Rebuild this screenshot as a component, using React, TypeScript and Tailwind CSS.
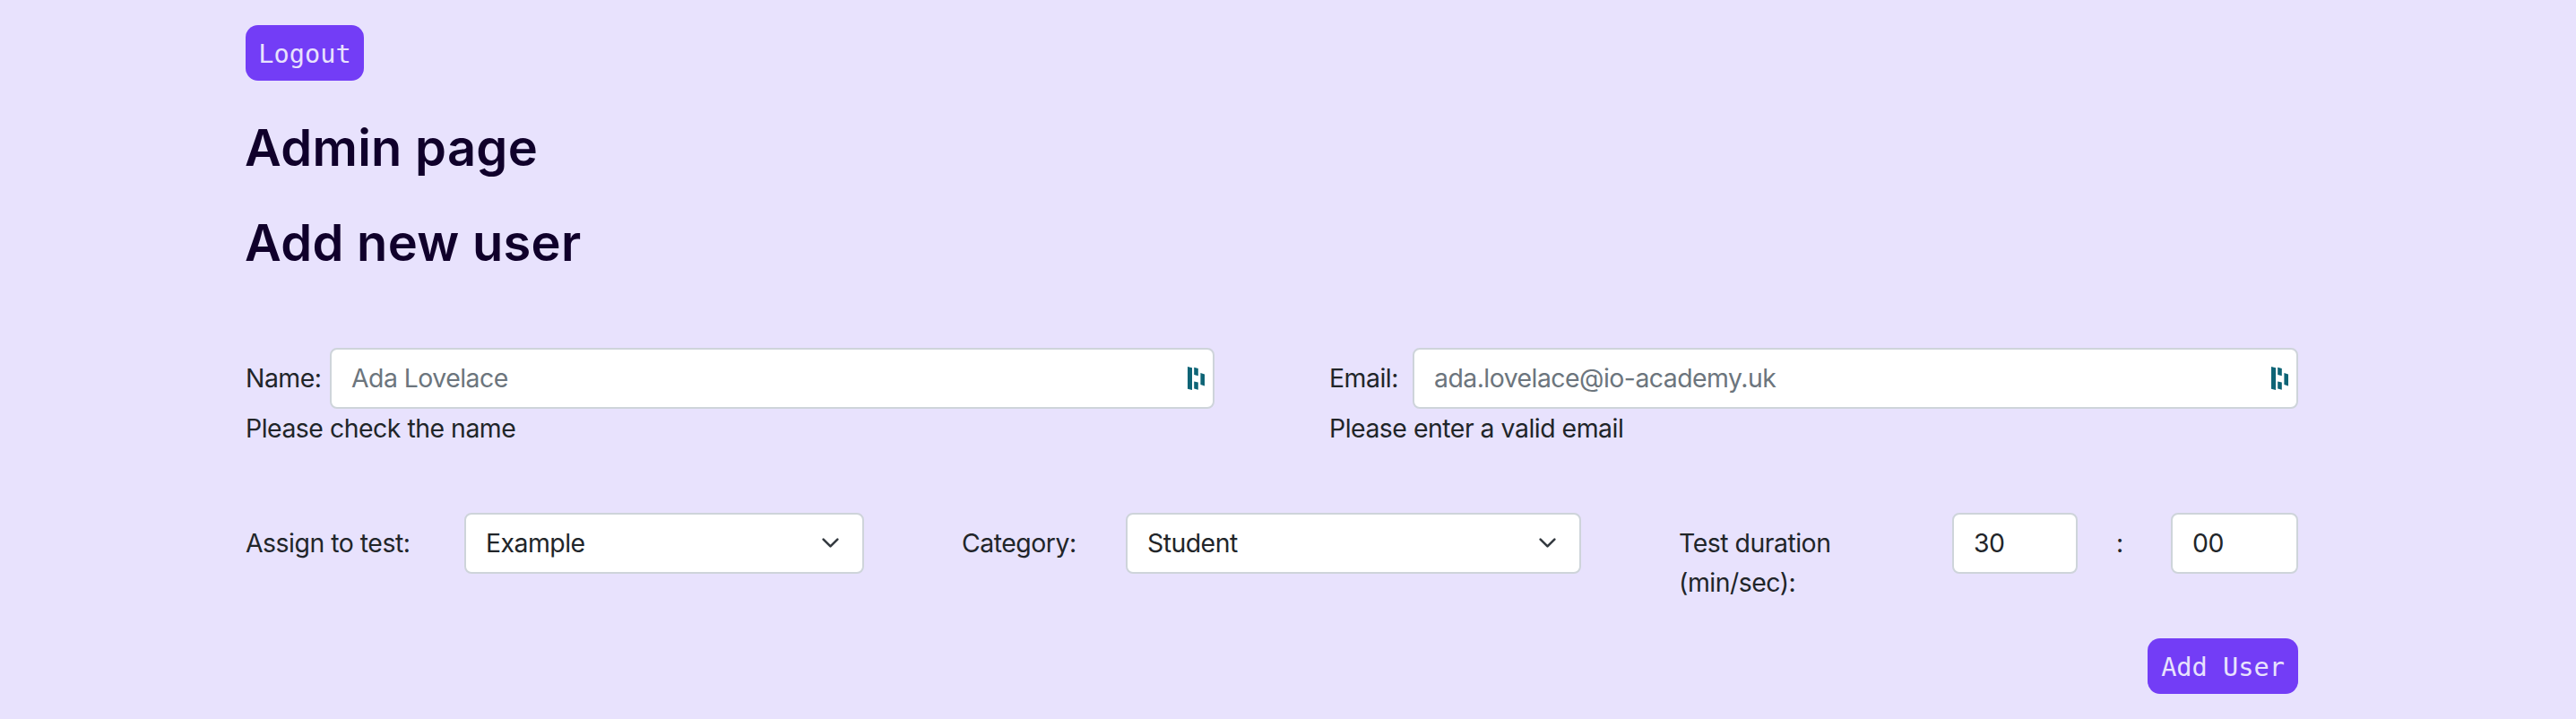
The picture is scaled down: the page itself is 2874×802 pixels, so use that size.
import React from "react";

const labelText = "text-[28.4px] leading-[44px] tracking-[-0.48px]";
const box =
  "flex h-[68px] items-center rounded-[8px] border-2 border-[#ced4da] bg-white text-[28.4px] leading-[44px] tracking-[-0.52px]";

function FieldMark() {
  return (
    <svg width="20" height="26" viewBox="0 0 20 26" fill="#0e6476" aria-hidden="true">
      <path d="M0 0l5 1.2V26l-5-1.2zM7.2.8l4.6 1.2v8.2L7.2 9zM7.2 16.4l4.6 1v8.4l-4.6-1.2zM14.4 7l4.6 1.4v13L14.4 20z" />
    </svg>
  );
}

function Chevron() {
  return (
    <svg width="21" height="21" viewBox="0 0 16 16" fill="none" className="mb-[2px]" aria-hidden="true">
      <path d="m2 5 6 6 6-6" stroke="#343a40" strokeWidth="2" strokeLinecap="round" strokeLinejoin="round" />
    </svg>
  );
}

function Button({ children, className }: { children: React.ReactNode; className: string }) {
  return (
    <button
      type="button"
      className={`flex h-[62px] items-center justify-center rounded-[14px] bg-[#733df6] pt-[2px] font-['DejaVu_Sans_Mono',monospace] text-[28.6px] leading-[44px] text-[#e8e2fd] ${className}`}
    >
      {children}
    </button>
  );
}

function TextField({ label, placeholder, error, className }: { label: string; placeholder: string; error: string; className: string }) {
  return (
    <div className="w-[1081px]">
      <div className="flex items-center">
        <span className={`${labelText} ${className}`}>{label}</span>
        <div className={`${box} flex-1 justify-between pl-[22px] pr-[8px] text-[#6c757d]`}>
          <span>{placeholder}</span>
          <FieldMark />
        </div>
      </div>
      <p className={labelText}>{error}</p>
    </div>
  );
}

export default function App() {
  return (
    <main className="h-[802px] bg-[#e8e2fd] pl-[274px] pr-[310px] pt-[28px] font-[Inter,sans-serif] text-[#212529]">
      <Button className="w-[132px]">Logout</Button>
      <h1 className="-ml-px mt-[40px] text-[56px] font-semibold leading-[70px] tracking-[0.3px] text-[#10002b]">Admin page</h1>
      <h1 className="-ml-px mt-[36px] text-[56px] font-semibold leading-[70px] tracking-[0.3px] text-[#10002b]">Add new user</h1>
      <div className="mt-[82px] flex justify-between">
        <TextField label="Name:" placeholder="Ada Lovelace" error="Please check the name" className="w-[94px]" />
        <TextField label="Email:" placeholder="ada.lovelace@io-academy.uk" error="Please enter a valid email" className="w-[93px]" />
      </div>
      <div className="mt-[72px] flex">
        <span className={`${labelText} w-[244px] pt-[12px]`}>Assign to test:</span>
        <div className={`${box} w-[446px] justify-between pl-[22px] pr-[25px]`}>
          <span>Example</span>
          <Chevron />
        </div>
        <span className={`${labelText} ml-[109px] w-[183px] pt-[12px]`}>Category:</span>
        <div className={`${box} w-[508px] justify-between pl-[22px] pr-[25px]`}>
          <span>Student</span>
          <Chevron />
        </div>
        <span className={`${labelText} ml-[109px] w-[305px] pt-[12px]`}>
          Test duration
          <br />
          (min/sec):
        </span>
        <div className={`${box} w-[140px] pl-[22px]`}>30</div>
        <span className={`${labelText} w-[104px] pt-[12px] pl-[43px]`}>:</span>
        <div className={`${box} w-[142px] pl-[22px]`}>00</div>
      </div>
      <div className="mt-[40px] flex justify-end">
        <Button className="w-[168px]">Add User</Button>
      </div>
    </main>
  );
}
